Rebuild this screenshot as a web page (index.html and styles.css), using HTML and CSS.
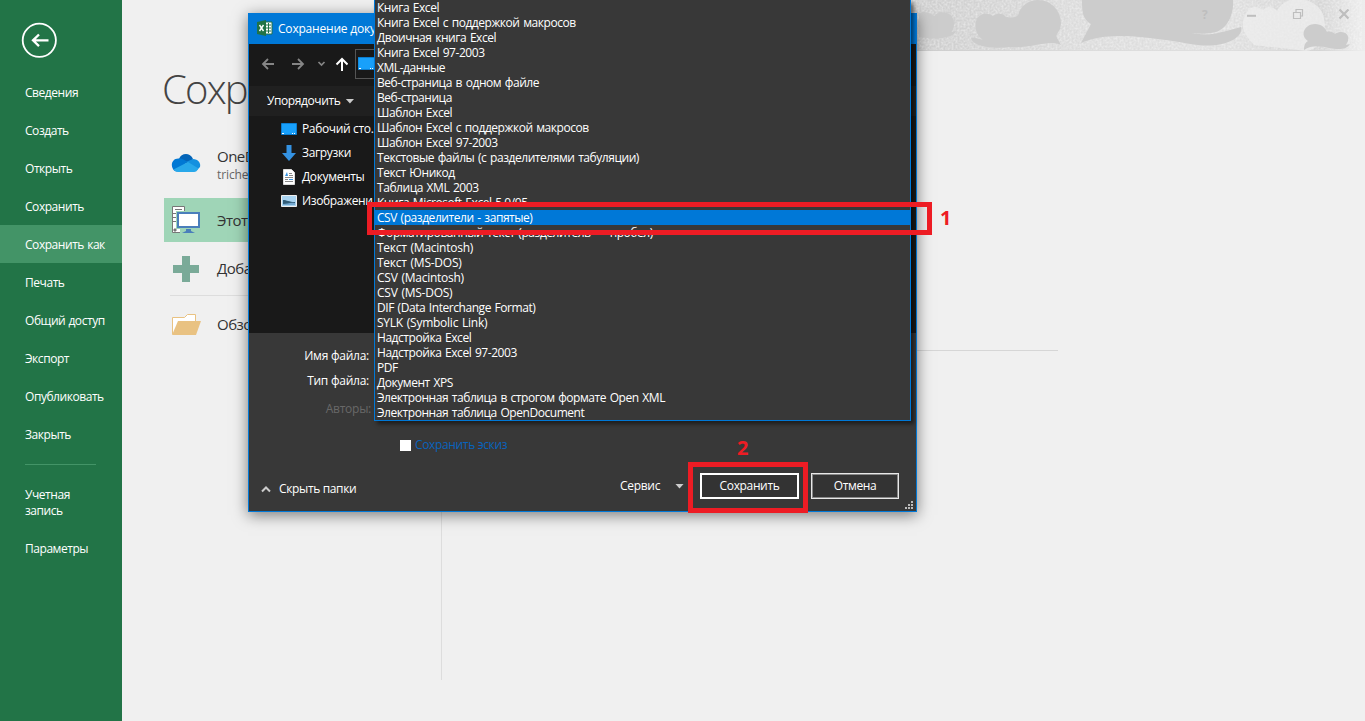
FILE: index.html
```html
<!DOCTYPE html>
<html lang="ru">
<head>
<meta charset="utf-8">
<title>Сохранение документа</title>
<link rel="stylesheet" href="styles.css">
</head>
<body>
<div class="app">
  <nav class="sidebar">
    <svg class="back" width="36" height="36" viewBox="0 0 36 36" fill="none" stroke="#fff"><circle cx="18.300" cy="18.300" r="16.6" stroke-width="1.8"/><path d="M27.500 18.300H12M18 12.500L12 18.300l6 5.800" stroke-width="2.300"/></svg>
    <a class="nav-item">Сведения</a>
    <a class="nav-item">Создать</a>
    <a class="nav-item">Открыть</a>
    <a class="nav-item">Сохранить</a>
    <a class="nav-item active">Сохранить как</a>
    <a class="nav-item">Печать</a>
    <a class="nav-item">Общий доступ</a>
    <a class="nav-item">Экспорт</a>
    <a class="nav-item">Опубликовать</a>
    <a class="nav-item">Закрыть</a>
    <div class="nav-line"></div>
    <a class="nav-item double">Учетная<br>запись</a>
    <a class="nav-item last">Параметры</a>
  </nav>
  <main class="page">
    <section class="places">
      <h1>Сохр</h1>
      <div class="place onedrive">
        <svg width="30" height="22" viewBox="0 0 30 22"><path d="M8 7C10 1 19 0 22 7L18 13 8 9z" fill="#0364b8"/><path d="M2 17C-1 12 2 6 8 6.500c3-.5 5 1 8 3L8 19C5 20 3 19 2 17z" fill="#0078d4"/><path d="M15 10l7-3c5 0 8 4 7 8l-3 3z" fill="#1490df"/><path d="M2.500 17.500L17 10l10.500 6.500C26 19 25 20 23 20H7c-2 0-3.500-1-4.500-2.500z" fill="#28a8ea"/></svg>
        <div><p>OneD</p><small>triche</small></div>
      </div>
      <div class="place selected">
        <svg width="30" height="30" viewBox="0 0 30 30"><path d="M1.500 1.500h12v26h-12z" fill="#fff" stroke="#777"/><path d="M4 4.500h7M2 8.500h4M2 12.500h3M2 16.500h3M3 24h2v2H3z" stroke="#777" fill="#777"/><path d="M5 6h25v18h-5v5H9v-5H5z" fill="#9fd5b7"/><path d="M7 8h21v14H7z" fill="#fff" stroke="#4a7ebb" stroke-width="2"/><path d="M15 24h5v2l4 2H11l4-2z" fill="#4a7ebb"/></svg>
        <p>Этот</p>
      </div>
      <div class="place add">
        <svg width="30" height="30" viewBox="0 0 30 30"><path d="M11 2h8v9h9v8h-9v9h-8v-9H2v-8h9z" fill="#7aaa98"/></svg>
        <p>Доба</p>
      </div>
      <div class="place browse">
        <svg width="30" height="24" viewBox="0 0 30 24"><path d="M1.500 21V4.500h12l3-3h8V10" fill="#fff" stroke="#e9c282"/><path d="M1 22L7 8h23l-5 14z" fill="#e9c282"/></svg>
        <p>Обзо</p>
      </div>
    </section>
    <section class="recent">
      <svg class="art" width="465" height="51" viewBox="900 0 465 51">
        <defs>
          <filter id="grain" x="0" y="0" width="1" height="1"><feTurbulence type="fractalNoise" baseFrequency=".5" numOctaves="2" seed="4"/><feColorMatrix values="0 0 0 0 1  0 0 0 0 1  0 0 0 0 1  1.800 0 0 0 -.6"/></filter>
          <linearGradient id="sky"><stop stop-color="#ccc"/><stop offset=".1" stop-color="#d0d0d0"/><stop offset=".4" stop-color="#dcdcdc"/><stop offset=".7" stop-color="#dfdfdf"/><stop offset=".9" stop-color="#d5d5d5"/><stop offset="1" stop-color="#efefef"/></linearGradient>
        </defs>
        <path d="M900 0h465v51H900z" fill="url(#sky)"/>
        <path d="M900 0h460v50H900z" filter="url(#grain)" opacity=".5"/>
        <path d="M917 13C924 10 929 14 932 16c6-7 20-4 20 7 0 4-1 8-3 9l5-1c-2 7-20 9-37 6z" fill="#ccc"/>
        <path d="M974 30c-3-14 8-20 17-14 4-3 10-3 13 1 12 2 13-3 13-5 4-8 11-12 19-12 17 0 26 17 22 29l-4 7 5 9c-13-6-29 4-51 2-16 2-37 0-39-9 3-1 8 1 12 2-4-3-6-6-7-10z" fill="#ccc"/>
        <path d="M1080 0h151c1 14-5 28-17 32-8 2-15 2-24 1 20 4 29-1 49-6 3 11-17 21-43 18-39-6-86-16-117-2l10-19c-9-5-9-14-9-24z" fill="#ccc"/>
        <path d="M1245 12c7-9 13-3 16-2 5-6 12-2 14 1 8-17 37-16 46 3 6 22-3 35-17 37l-52-6c-11-11-15-21-7-33z" fill="#eee" opacity=".75"/>
        <path d="M1302 50c0-6 2-8 4-9-9-6-3-17 7-17 7 0 10 4 12 8 3-1 6 0 8 2 6-4 15-2 13 7l-2 4 4-1c-4 7-14 5-21 4-8-2-18-3-25 2z" fill="#ccc"/>
        <g fill="none" stroke="#bebebe" transform="translate(-1 0)"><path d="M1246 15.800h9" stroke-width="2"/><path d="M1292.500 12.500h7v6h-7zM1295 12V9.500h6.500V16H1300" stroke-width="1.200"/><path d="M1338.500 9.500l9 9M1347.500 9.500l-9 9" stroke-width="2.200"/></g>
        <text class="help" x="1200" y="19">?</text>
      </svg>
      <div class="rule"></div>
    </section>
  </main>
</div>

<div class="dialog">
  <div class="titlebar"><svg width="16" height="16" viewBox="0 0 16 16"><path d="M8 2h7v12H8z" fill="#fff" stroke="#217346"/><path d="M9 5h5M9 8h5M9 11h5M11.500 3v10" stroke="#217346"/><path d="M0 2l9-2v16l-9-2z" fill="#217346"/><path d="M2.500 5l4 6M6.500 5l-4 6" stroke="#fff" stroke-width="1.400"/></svg><span>Сохранение доку</span></div>
  <div class="address">
    <svg width="88" height="24" viewBox="0 0 88 24" fill="none" stroke-width="1.800"><path d="M14 12H3M8 7l-5 5 5 5M32 12h11M38 7l5 5-5 5" stroke="#858585"/><path d="M58.500 10l3 3 3-3" stroke="#858585" stroke-width="1.700"/><path d="M82 19V7M76.500 12.500L82 7l5.500 5.500" stroke="#fff" stroke-width="2"/></svg>
    <div class="path"><svg width="18" height="14" viewBox="0 0 18 14"><path d="M0 .5h19v12H0z" fill="#18a0fb" stroke="#0b7dd0"/><path d="M1 11.500h2M12 11.500h1M14 11.500h1" stroke="#fff"/></svg></div>
  </div>
  <div class="toolbar"><span>Упорядочить</span><i class="caret"></i></div>
  <div class="folders">
    <div class="folder"><svg width="16" height="16" viewBox="0 0 16 16"><path d="M.5 2.500h15v11H.5z" fill="#18a0fb" stroke="#0b7dd0"/><path d="M1 12.500h2M11 12.500h1M13 12.500h1" stroke="#fff"/></svg><span>Рабочий сто.</span></div>
    <div class="folder"><svg width="16" height="16" viewBox="0 0 16 16"><path d="M5.500 0h5v8H15l-7 8-7-8h4.500z" fill="#3492e2"/></svg><span>Загрузки</span></div>
    <div class="folder"><svg width="16" height="16" viewBox="0 0 16 16"><path d="M2.500.5h8l3 3v12h-11z" fill="#fff" stroke="#ddd"/><path d="M4 8.500h8M4 10.500h3M4 12.500h8M8 4.500h3M8 6.500h4" stroke="#888"/><path d="M4 7l2-4 1 4zM8 10h4v1H8z" fill="#3492e2"/></svg><span>Документы</span></div>
    <div class="folder"><svg width="16" height="16" viewBox="0 0 16 16"><path d="M.5 2.500h15v11H.5z" fill="#a9d4f1" stroke="#eee"/><path d="M2 7c4 0 6 2 12 2v3H2z" fill="#315d78"/><path d="M2 11c4 0 7-2 12-1v2H2z" fill="#73a8d0"/></svg><span>Изображени</span></div>
  </div>
  <div class="form">
    <div class="field name">Имя файла:</div>
    <div class="field type">Тип файла:</div>
    <div class="field authors">Авторы:</div>
    <div class="thumb"><i></i><span>Сохранить эскиз</span></div>
    <div class="footer">
      <div class="hide"><svg width="10" height="8" viewBox="0 0 10 8"><path d="M1 6.500l4-4 4 4" fill="none" stroke="#ccc" stroke-width="2"/></svg><span>Скрыть папки</span></div>
      <div class="service"><span>Сервис</span><i class="caret"></i></div>
      <button class="primary">Сохранить</button>
      <button>Отмена</button>
    </div>
  </div>
  <svg class="grip" width="8" height="8" viewBox="0 0 8 8" fill="#bbb"><path d="M6 0h2v2H6zM3 3h2v2H3zM6 3h2v2H6zM0 6h2v2H0zM3 6h2v2H3zM6 6h2v2H6z"/></svg>
</div>

<ul class="types">
  <li>Книга Excel</li>
  <li>Книга Excel с поддержкой макросов</li>
  <li>Двоичная книга Excel</li>
  <li>Книга Excel 97-2003</li>
  <li>XML-данные</li>
  <li>Веб-страница в одном файле</li>
  <li>Веб-страница</li>
  <li>Шаблон Excel</li>
  <li>Шаблон Excel с поддержкой макросов</li>
  <li>Шаблон Excel 97-2003</li>
  <li>Текстовые файлы (с разделителями табуляции)</li>
  <li>Текст Юникод</li>
  <li>Таблица XML 2003</li>
  <li>Книга Microsoft Excel 5.0/95</li>
  <li class="chosen">CSV (разделители - запятые)</li>
  <li>Форматированный текст (разделитель — пробел)</li>
  <li class="latin">Текст (Macintosh)</li>
  <li class="latin">Текст (MS-DOS)</li>
  <li class="latin">CSV (Macintosh)</li>
  <li class="latin">CSV (MS-DOS)</li>
  <li>DIF (Data Interchange Format)</li>
  <li class="latin">SYLK (Symbolic Link)</li>
  <li>Надстройка Excel</li>
  <li>Надстройка Excel 97-2003</li>
  <li>PDF</li>
  <li>Документ XPS</li>
  <li>Электронная таблица в строгом формате Open XML</li>
  <li>Электронная таблица OpenDocument</li>
</ul>
<div class="mark first"></div><b class="digit one">1</b>
<div class="mark second"></div><b class="digit two">2</b>
</body>
</html>
```
FILE: styles.css
```css
* { box-sizing: border-box; }
body { margin: 0; font: 12px/16px "Open Sans", "Noto Sans", sans-serif; overflow: hidden; }
p, h1, ul { margin: 0; padding: 0; }
svg { display: block; flex: none; }
.app { display: flex; width: 1365px; height: 721px; background: #f0f0f0; }
.sidebar { width: 122px; flex: none; background: #227447; color: #fff; padding-top: 22px; display: flex; flex-direction: column; }
.back { margin: 0 0 15px 21px; }
.nav-item { height: 38px; padding: 0 0 0 25px; line-height: 40px; letter-spacing: -.45px; word-spacing: .5px; white-space: nowrap; }
.active { background: #439467; }
.nav-line { height: 1px; width: 71px; margin: 11px 0 0 25px; background: #439467; }
.nav-item.double { height: 65px; padding-top: 22px; line-height: 16px; }
.nav-item.last { line-height: 38px; }
.page { flex: 1; display: flex; }
.places { width: 320px; border-right: 1px solid #ddd; padding-left: 42px; height: 680px; overflow: hidden; white-space: nowrap; }
h1 { font-size: 40px; line-height: 50px; font-weight: 300; color: #444; margin: 64px 0 0 -2px; letter-spacing: -1.8px; }
.place { display: flex; align-items: center; gap: 16px; padding-left: 7px; height: 44px; font-size: 15px; line-height: 19px; letter-spacing: -.5px; color: #333; }
.place small { display: block; font-size: 12px; line-height: 17px; letter-spacing: -.1px; color: #666; }
.onedrive { margin: 29px 0 11px; }
.onedrive svg { margin-top: -4px; }
.selected { background: #9fd5b7; }
.add { margin-top: 2px; height: 49px; }
.browse { margin: 2px 0 0 6px; padding-left: 1px; height: 58px; border-top: 1px solid #ddd; }
.recent { flex: 1; display: flex; flex-direction: column; align-items: flex-end; }
.rule { width: 616px; height: 1px; background: #d6d6d6; margin: 299px 309px 0 0; }
.help { font: bold 12px "Open Sans"; fill: #bebebe; }
.dialog { position: absolute; left: 248px; top: 13px; width: 669px; height: 499px; border: 1px solid #0078d7; background: #383838; color: #fff; box-shadow: 0 3px 14px rgba(0,0,0,.5); white-space: nowrap; letter-spacing: -.3px; }
.titlebar { height: 30px; background: #0078d7; display: flex; align-items: center; gap: 5px; padding-left: 8px; }
.titlebar svg { margin-top: -2px; }
.titlebar span { letter-spacing: -.2px; }
.address { height: 42px; background: #191919; display: flex; align-items: center; padding: 0 0 2px 11px; gap: 7px; }
.path { height: 30px; width: 500px; border: 1px solid #555; padding: 7px 2px; }
.toolbar { height: 30px; background: #202020; display: flex; align-items: center; gap: 5px; padding: 0 0 0 18px; letter-spacing: -.4px; }
.caret { width: 8px; height: 4px; background: #ccc; clip-path: polygon(0 0, 100% 0, 50% 100%); }
.folders { height: 217px; background: #191919; padding: 1px 0 0 32px; }
.folder { display: flex; align-items: center; gap: 5px; height: 24px; letter-spacing: -.35px; }
.form { padding-top: 15px; height: 178px; display: flex; flex-direction: column; }
.field { width: 120px; text-align: right; height: 16px; margin-bottom: 9px; letter-spacing: -.25px; }
.field.type { margin-bottom: 12px; }
.field.authors { color: #686868; width: 122px; margin-bottom: 20px; }
.thumb { display: flex; align-items: center; gap: 4px; padding-left: 151px; color: #0863bd; height: 16px; letter-spacing: -.35px; }
.thumb i { width: 11px; height: 11px; background: #fff; }
.footer { display: flex; align-items: center; margin-top: 20px; padding-left: 12px; height: 26px; }
.hide { display: flex; align-items: center; gap: 8px; width: 359px; padding-top: 6px; letter-spacing: -.35px; }
.service { display: flex; align-items: center; justify-content: space-between; width: 64px; margin-right: 16px; }
.toolbar .caret, .service .caret { width: 9px; height: 5px; }
button { font: inherit; letter-spacing: -.35px; color: #fff; background: #333; border: 1px solid #e8e8e8; box-shadow: inset 0 0 0 1px #888; width: 88px; height: 26px; padding: 0; }
button.primary { width: 99px; border: 2px solid #fff; box-shadow: none; margin-right: 12px; }
.grip { position: absolute; right: 3px; bottom: 2px; }
.types { position: absolute; left: 374px; top: 0; width: 537px; height: 421px; background: #383838; border: 1px solid #0078d7; border-top: 0; color: #fff; list-style: none; box-shadow: 3px 3px 4px rgba(0,0,0,.5); }
.types li { height: 15px; line-height: 16px; padding-left: 2px; white-space: nowrap; letter-spacing: -.45px; word-spacing: 1px; }
.types .latin { letter-spacing: -.25px; }
.types .chosen { background: #0078d7; }
.mark { position: absolute; border: 5px solid #ed1c24; }
.first { left: 367px; top: 202px; width: 565px; height: 33px; }
.second { left: 688px; top: 462px; width: 120px; height: 51px; }
.digit { position: absolute; color: #ed1c24; font: bold 20px/24px "Open Sans", sans-serif; }
.one { left: 940px; top: 206px; }
.two { left: 737px; top: 436px; }
```
